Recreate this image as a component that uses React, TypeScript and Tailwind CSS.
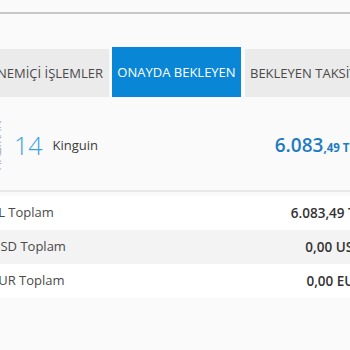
export default function App() {
  const rows = [
    { label: "TL Toplam", value: "6.083,49 TL", bg: "bg-white" },
    { label: "USD Toplam", value: "0,00 USD", bg: "bg-[#f3f3f3]" },
    { label: "EUR Toplam", value: "0,00 EUR", bg: "bg-white" },
  ];

  return (
    <div
      className="w-[350px] h-[350px] overflow-hidden bg-[#fafafa] pt-[12px]"
      style={{ fontFamily: '"Open Sans", "Noto Sans", sans-serif' }}
    >
      {/* top rule */}
      <div className="h-[2px] bg-[#c8c8c8]" />

      <div className="ml-[-10px] w-[376px]">
        {/* tabs */}
        <div className="mt-[33px] flex items-end text-[13px] whitespace-nowrap">
          <div className="w-[119px] h-[48px] shrink-0 flex items-center justify-end overflow-hidden bg-[#ebebeb] text-[#4a4a4a] px-[6px] pt-[1px]">
            DÖNEMİÇİ İŞLEMLER
          </div>
          <div className="ml-[3px] w-[129px] h-[50px] shrink-0 flex items-center justify-center bg-[#0a86d6] text-white pt-[2px]">
            ONAYDA BEKLEYEN
          </div>
          <div className="ml-[4px] h-[48px] flex-1 flex items-center bg-[#ebebeb] text-[#4a4a4a] px-[5px] pt-[1px] overflow-hidden">
            BEKLEYEN TAKSİTLER
          </div>
        </div>

        {/* pending item */}
        <div className="h-[95px] flex items-center pt-[4px] pl-[1px] pr-[10px] border-b-2 border-[#e8e8e8]">
          <div className="[writing-mode:vertical-rl] rotate-180 text-[12px] leading-none text-[#aaa]">
            HAZİRAN
          </div>
          <div className="ml-[11px] text-[25px] font-light text-[#3aa2dc] leading-none">
            14
          </div>
          <div className="ml-[10px] text-[13px] text-[#3a3a3a]">Kinguin</div>
          <div className="ml-auto flex items-baseline font-semibold text-[#1f7ac2]">
            <span className="text-[19px]">6.083</span>
            <span className="text-[11.5px] font-bold">,49 TL</span>
          </div>
        </div>

        {/* totals */}
        <div className="mt-[4px]">
          {rows.map((r) => (
            <div
              key={r.label}
              className={`${r.bg} h-[34px] flex items-center justify-between pl-[1px] pr-[3px]`}
            >
              <span className="text-[13px] text-[#4a4a4a]">{r.label}</span>
              <span className="text-[13.5px] font-semibold text-[#333]">{r.value}</span>
            </div>
          ))}
        </div>
      </div>
    </div>
  );
}
